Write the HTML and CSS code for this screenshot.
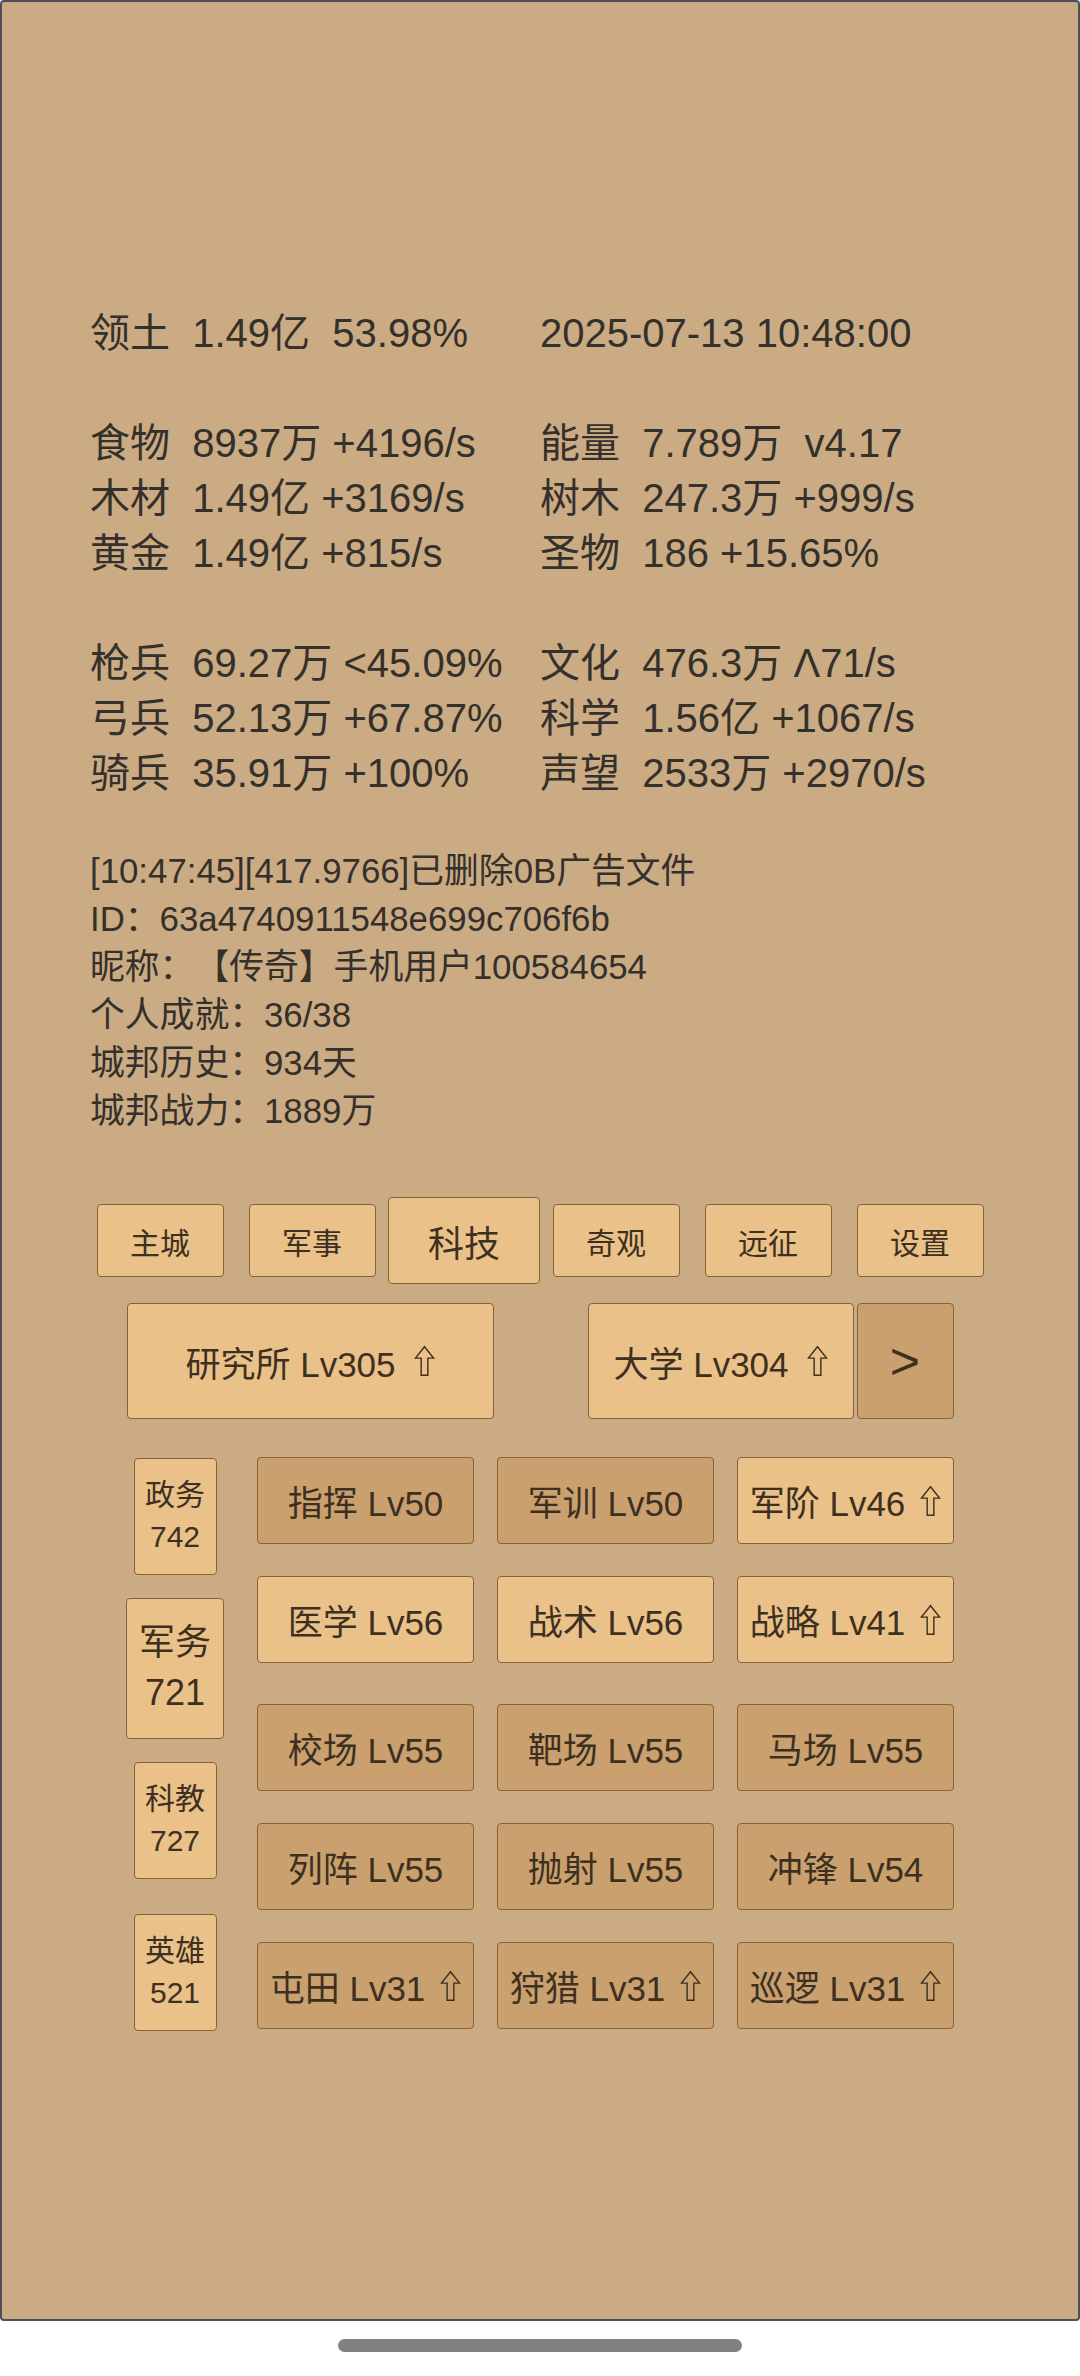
FILE: index.html
```html
<!DOCTYPE html>
<html lang="zh-CN">
<head>
<meta charset="utf-8">
<title>城邦</title>
<link rel="stylesheet" href="styles.css">
</head>
<body>
<div class="screen">
  <div class="stats">
    <div>领土  1.49亿  53.98%</div><div>2025-07-13 10:48:00</div>
    <div class="blank"></div>
    <div>食物  8937万 +4196/s</div><div>能量  7.789万  v4.17</div>
    <div>木材  1.49亿 +3169/s</div><div>树木  247.3万 +999/s</div>
    <div>黄金  1.49亿 +815/s</div><div>圣物  186 +15.65%</div>
    <div class="blank"></div>
    <div>枪兵  69.27万 &lt;45.09%</div><div>文化  476.3万 Λ71/s</div>
    <div>弓兵  52.13万 +67.87%</div><div>科学  1.56亿 +1067/s</div>
    <div>骑兵  35.91万 +100%</div><div>声望  2533万 +2970/s</div>
  </div>

  <div class="log">
    <div>[10:47:45][417.9766]已删除0B广告文件</div>
    <div>ID：63a4740911548e699c706f6b</div>
    <div>昵称：【传奇】手机用户100584654</div>
    <div>个人成就：36/38</div>
    <div>城邦历史：934天</div>
    <div>城邦战力：1889万</div>
  </div>

  <div class="tabs">
    <div class="slot"><div class="btn tab">主城</div></div>
    <div class="slot"><div class="btn tab">军事</div></div>
    <div class="slot"><div class="btn tab on">科技</div></div>
    <div class="slot"><div class="btn tab">奇观</div></div>
    <div class="slot"><div class="btn tab">远征</div></div>
    <div class="slot"><div class="btn tab">设置</div></div>
  </div>

  <div class="builds">
    <div class="btn bld wide"><span>研究所 Lv305</span><svg class="up bup" viewBox="0 0 22 33"><path d="M11 1.5 L20.5 13.5 H14.5 V31.5 H7.5 V13.5 H1.5 Z"/></svg></div>
    <div class="bgroup">
      <div class="btn bld mid"><span>大学 Lv304</span><svg class="up bup" viewBox="0 0 22 33"><path d="M11 1.5 L20.5 13.5 H14.5 V31.5 H7.5 V13.5 H1.5 Z"/></svg></div>
      <div class="btn dark bld next">&gt;</div>
    </div>
  </div>

  <div class="area">
    <div class="side">
      <div class="sslot"><div class="btn sbox">政务<br>742</div></div>
      <div class="sslot"><div class="btn sbox on">军务<br>721</div></div>
      <div class="sslot"><div class="btn sbox">科教<br>727</div></div>
      <div class="sslot"><div class="btn sbox">英雄<br>521</div></div>
    </div>
    <div class="skills">
      <div class="sgrid">
        <div class="btn dark sk"><span>指挥 Lv50</span></div>
        <div class="btn dark sk"><span>军训 Lv50</span></div>
        <div class="btn sk"><span>军阶 Lv46</span><svg class="up" viewBox="0 0 22 33"><path d="M11 1.5 L20.5 13.5 H14.5 V31.5 H7.5 V13.5 H1.5 Z"/></svg></div>
        <div class="btn sk"><span>医学 Lv56</span></div>
        <div class="btn sk"><span>战术 Lv56</span></div>
        <div class="btn sk"><span>战略 Lv41</span><svg class="up" viewBox="0 0 22 33"><path d="M11 1.5 L20.5 13.5 H14.5 V31.5 H7.5 V13.5 H1.5 Z"/></svg></div>
      </div>
      <div class="sgrid">
        <div class="btn dark sk"><span>校场 Lv55</span></div>
        <div class="btn dark sk"><span>靶场 Lv55</span></div>
        <div class="btn dark sk"><span>马场 Lv55</span></div>
        <div class="btn dark sk"><span>列阵 Lv55</span></div>
        <div class="btn dark sk"><span>抛射 Lv55</span></div>
        <div class="btn dark sk"><span>冲锋 Lv54</span></div>
        <div class="btn dark sk"><span>屯田 Lv31</span><svg class="up" viewBox="0 0 22 33"><path d="M11 1.5 L20.5 13.5 H14.5 V31.5 H7.5 V13.5 H1.5 Z"/></svg></div>
        <div class="btn dark sk"><span>狩猎 Lv31</span><svg class="up" viewBox="0 0 22 33"><path d="M11 1.5 L20.5 13.5 H14.5 V31.5 H7.5 V13.5 H1.5 Z"/></svg></div>
        <div class="btn dark sk"><span>巡逻 Lv31</span><svg class="up" viewBox="0 0 22 33"><path d="M11 1.5 L20.5 13.5 H14.5 V31.5 H7.5 V13.5 H1.5 Z"/></svg></div>
      </div>
    </div>
  </div>
</div>
<div class="home"></div>
</body>
</html>
```

FILE: styles.css
```css
html, body {
  margin: 0;
  padding: 0;
  background: #ffffff;
}

body {
  font-family: "Liberation Sans", "Noto Sans CJK SC", sans-serif;
  width: 1080px;
}

.screen {
  box-sizing: border-box;
  width: 1080px;
  height: 2321px;
  background: #cbab83;
  border: 2px solid #4b505c;
  border-radius: 4px;
  overflow: hidden;
}

.stats {
  margin: 304px 0 0 88px;
  display: grid;
  grid-template-columns: 450px 450px;
  grid-auto-rows: 55px;
  font-size: 40px;
  line-height: 55px;
  color: #34302b;
  white-space: pre;
}

.blank {
  grid-column: 1 / -1;
}

.log {
  margin: 46px 0 0 88px;
  font-size: 34.8px;
  line-height: 48px;
  color: #34302b;
  white-space: nowrap;
  text-spacing-trim: space-all;
}

.btn {
  box-sizing: border-box;
  background: #eac189;
  border: 1.5px solid #84633b;
  border-radius: 4px;
  color: #3d3021;
  display: flex;
  align-items: center;
  justify-content: center;
  white-space: nowrap;
}

.btn.dark {
  background: #c9a06e;
}

.tabs {
  display: flex;
  align-items: center;
  width: 912px;
  height: 87px;
  margin: 62px auto 0;
}

.slot {
  width: 152px;
  display: flex;
  justify-content: center;
}

.tab {
  width: 127px;
  height: 73px;
  font-size: 30px;
}

.tab.on {
  width: 152px;
  height: 87px;
  font-size: 36px;
}

.builds {
  display: flex;
  justify-content: center;
  gap: 94px;
  height: 116px;
  margin-top: 19px;
}

.bgroup {
  display: flex;
  gap: 3px;
}

.bld {
  height: 116px;
  font-size: 35px;
}

.wide {
  width: 367px;
}

.mid {
  width: 266px;
}

.next {
  width: 97px;
  font-size: 52px;
}

.up {
  width: 21px;
  height: 32px;
  margin-left: 15px;
  fill: none;
  stroke: #3d3021;
  stroke-width: 1.5;
}

.up.bup {
  margin-left: 18px;
}

.area {
  display: flex;
  width: 828px;
  margin: 21px auto 0;
}

.side {
  width: 98px;
}

.sslot {
  height: 152px;
  display: flex;
  align-items: center;
  justify-content: center;
}

.sbox {
  width: 83px;
  height: 117px;
  flex-direction: column;
  font-size: 30px;
  line-height: 1.39;
  text-align: center;
}

.sbox.on {
  width: 98px;
  height: 141px;
  font-size: 36px;
}

.skills {
  margin-left: 33px;
  padding-top: 17px;
}

.sgrid {
  display: grid;
  grid-template-columns: repeat(3, 217px);
  grid-auto-rows: 87px;
  column-gap: 23px;
  row-gap: 32px;
}

.sgrid + .sgrid {
  margin-top: 41px;
}

.sk {
  font-size: 35px;
}

.home {
  width: 404px;
  height: 13px;
  border-radius: 7px;
  background: #808080;
  margin: 18px auto 0;
}
```
